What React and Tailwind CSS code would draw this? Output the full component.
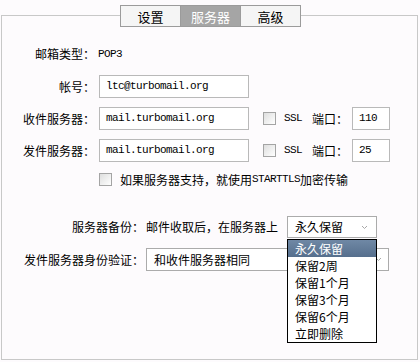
import React from 'react'

const cjk = "font-[family-name:'Noto_Sans_CJK_SC',sans-serif]"
const mono = "font-[family-name:'Liberation_Mono',monospace] text-[11px] tracking-[-0.6px]"

const backupOptions = ['永久保留', '保留2周', '保留1个月', '保留3个月', '保留6个月', '立即删除']

function Checkbox() {
	return <span className="block w-[13px] h-[13px] shrink-0 border border-[#a4a4a4] bg-linear-to-br from-[#dedede] to-white" />
}

function TextBox({value, width}) {
	return <div className={`${width} h-[23px] border border-[#b9b9b9] bg-white flex items-center pl-[6px] ${mono} text-black`}>
		{value}
	</div>
}

function Tabs() {
	const tabs = [
		{name: '设置', current: false},
		{name: '服务器', current: true},
		{name: '高级', current: false},
	]
	return <div className="relative z-10 -mt-[11px] ml-[118px] flex h-[22px] w-[181px] border border-[#9b9b9b] bg-[#f5f5f5]">
		{tabs.map((t, i) => (
			<div
				key={t.name}
				className={
					(t.current ? 'bg-[#a5a5a5] text-white' : 'text-black') +
					(i > 0 ? ' border-l border-[#9b9b9b]' : '') +
					' flex-1 flex items-center justify-center text-[13px] leading-none'
				}
			>
				{t.name}
			</div>
		))}
	</div>
}

function ServerRow({label, host, port}) {
	return <div className="flex items-center">
		<span className="w-[93px] mr-[4px] text-right text-[12px]">{label}：</span>
		<TextBox value={host} width="w-[150px]" />
		<span className="ml-[14px]"><Checkbox /></span>
		<span className={`ml-[8px] ${mono}`}>SSL</span>
		<span className="ml-[10px] text-[12px]">端口：</span>
		<span className="ml-[4px]"><TextBox value={port} width="w-[38px]" /></span>
	</div>
}

function Chevron() {
	return <svg width="7" height="5" viewBox="0 0 7 5" className="shrink-0">
		<path d="M1 1 L3.5 3.5 L6 1" fill="none" stroke="#a8a8a8" strokeWidth="1" />
	</svg>
}

export default function App() {
	return (
		<div className={`w-[420px] h-[362px] bg-[#fdfbfd] pt-[15px] pl-[1px] text-black ${cjk}`}>
			<div className="w-[417px] h-[345px] border border-[#c8c8c8] bg-[#fdfbfd]">
				<Tabs />

				<div className="mt-[19px] pl-[33px] h-[16px] flex items-center text-[12px]">
					邮箱类型：<span className={`ml-[3px] ${mono}`}>POP3</span>
				</div>

				<div className="mt-[13px] flex flex-col gap-[9px]">
					<div className="flex items-center">
						<span className="w-[93px] mr-[4px] text-right text-[12px]">帐号：</span>
						<TextBox value="ltc@turbomail.org" width="w-[150px]" />
					</div>
					<ServerRow label="收件服务器" host="mail.turbomail.org" port="110" />
					<ServerRow label="发件服务器" host="mail.turbomail.org" port="25" />
				</div>

				<div className="mt-[9px] h-[17px] pl-[97px] flex items-center">
					<Checkbox />
					<span className="ml-[8px] text-[12px] flex items-center">
						如果服务器支持，就使用<span className={mono}>STARTTLS</span>加密传输
					</span>
				</div>

				<div className="mt-[28px] flex items-center h-[22px] text-[12px]">
					<span className="w-[142px] mr-[2px] text-right">服务器备份：</span>
					<span>邮件收取后，在服务器上</span>
					<div className="relative ml-[9px]">
						<div className="w-[90px] h-[22px] border border-[#ababab] bg-white flex items-center justify-between pl-[7px] pr-[8px]">
							<span>永久保留</span>
							<Chevron />
						</div>
						{/* open option list */}
						<div className="absolute left-0 top-[23px] z-20 w-[90px] border border-black bg-white">
							{backupOptions.map((o, i) => (
								<div
									key={o}
									className={
										(i === 0 ? 'bg-linear-to-b from-[#6f88a5] to-[#566f8d] text-white ' : '') +
										'h-[17px] leading-[17px] pl-[7px] text-[12px]'
									}
								>
									{o}
								</div>
							))}
						</div>
					</div>
				</div>

				<div className="mt-[10px] flex items-center h-[23px] text-[12px]">
					<span className="w-[142px] mr-[2px] text-right">发件服务器身份验证：</span>
					<div className="w-[243px] h-[23px] border border-[#ababab] bg-white flex items-center justify-between pl-[7px] pr-[6px]">
						<span>和收件服务器相同</span>
						<Chevron />
					</div>
				</div>
			</div>
		</div>
	)
}
